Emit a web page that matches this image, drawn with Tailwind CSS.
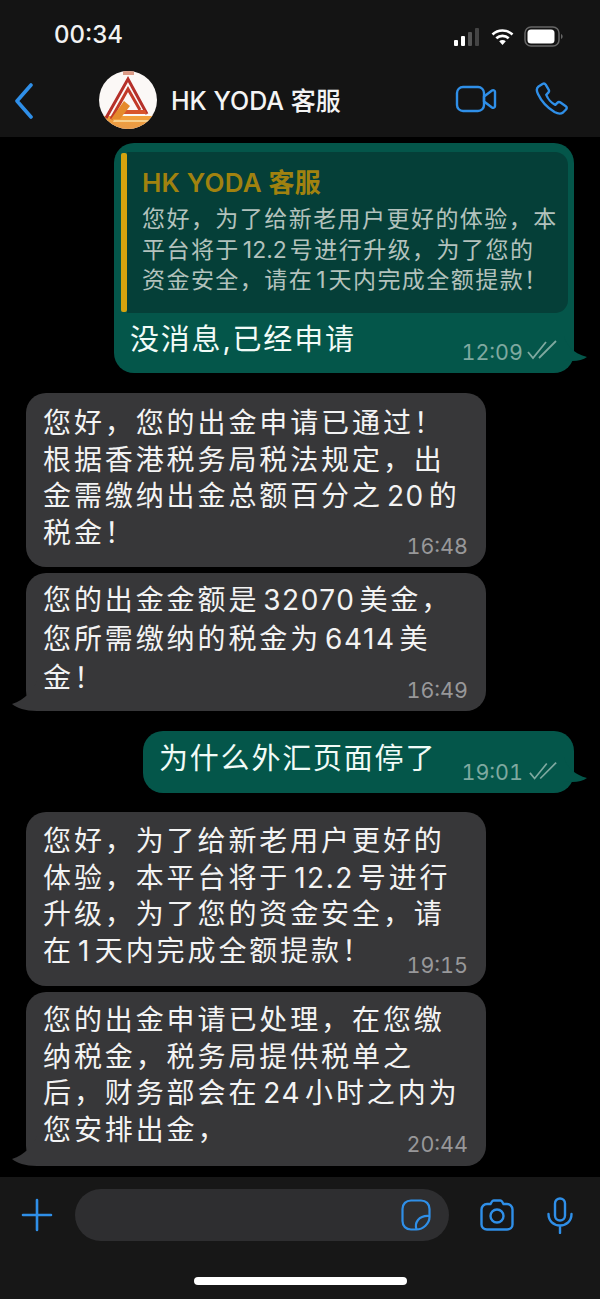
<!DOCTYPE html>
<html lang="zh">
<head>
<meta charset="utf-8">
<script src="https://cdn.jsdelivr.net/npm/@tailwindcss/browser@4"></script>
</head>
<body class="m-0 bg-black">
<div class="w-[600px] h-[1299px] overflow-hidden flex flex-col bg-black text-white font-['Inter','Noto_Sans_CJK_SC',sans-serif]">
  <!-- top -->
  <header class="h-[137px] shrink-0 bg-[#141414] flex flex-col">
    <div class="h-[69px] flex items-end justify-between pl-[54px] pr-[37px] pb-[20px]">
      <span class="text-[24px] leading-[28px] font-medium text-[#f2f2f2]">00:34</span>
      <div class="flex items-center gap-[10px] mb-[2px]">
        <svg class="w-[28px] h-[20px]" viewBox="0 0 28 20"><rect x="1" y="13" width="4" height="6" rx="1" fill="#fff"/><rect x="8" y="9" width="4" height="10" rx="1" fill="#fff"/><rect x="15" y="5" width="4" height="14" rx="1" fill="#555"/><rect x="22" y="1" width="4" height="18" rx="1" fill="#444"/></svg>
        <svg class="w-[23px] h-[18px]" viewBox="0 0 23 18"><path d="M1.500 6.500C7 1.200 16 1.200 21.500 6.500" fill="none" stroke="#fff" stroke-width="2.600"/><path d="M5.300 10.300C8.800 7 14.200 7 17.700 10.300" fill="none" stroke="#fff" stroke-width="2.600"/><path d="M8.200 13.300 11.500 17 14.800 13.300C13 11.600 10 11.600 8.200 13.300Z" fill="#fff"/></svg>
        <svg class="w-[39px] h-[21px]" viewBox="0 0 39 21"><rect x="1" y="1" width="34" height="19" rx="6" fill="none" stroke="#666" stroke-width="1.500"/><rect x="3.500" y="3.500" width="27" height="14" rx="3.500" fill="#fff"/><path d="M37 8c1.200.4 1.600 1.400 1.600 2.500s-.4 2.100-1.600 2.500Z" fill="#666"/></svg>
      </div>
    </div>
    <div class="flex-1 relative flex items-center pl-[13px] pr-[33px]">
      <svg class="w-[22px] h-[36px] -mt-[5px]" viewBox="0 0 22 36"><path d="M18 2 4 18l14 16" fill="none" stroke="#2f8fe8" stroke-width="3.600" stroke-linecap="round" stroke-linejoin="round"/></svg>
      <svg class="w-[60px] h-[60px] ml-[63px] -mt-[6px] shrink-0" viewBox="0 0 60 60">
        <defs>
          <clipPath id="av"><circle cx="30" cy="30" r="29"/></clipPath>
          <linearGradient id="gb" x1="0" y1="0" x2="0" y2="1"><stop offset="0" stop-color="#f2a03a"/><stop offset="1" stop-color="#e89a4a"/></linearGradient>
        </defs>
        <g clip-path="url(#av)">
          <rect width="60" height="60" fill="#fbf8f6"/>
          <rect x="25" y="0" width="11" height="5" fill="#dc9b86"/>
          <path d="M3 42 9 49 5 52Z" fill="#d89a8a"/>
          <path d="M57 42 51 49 55 52Z" fill="#e0b09a"/>
          <rect y="46" width="60" height="14" fill="url(#gb)"/>
          <path d="M8 48 30 9 49 44" fill="none" stroke="#b5302a" stroke-width="3"/>
          <path d="M13 49 30 19 42 40" fill="none" stroke="#c23a28" stroke-width="3"/>
          <path d="M27 40H47L49 44H25Z" fill="#d8552c"/>
          <path d="M26 31 13 49H22L32 36Z" fill="#e58b2c"/>
          <path d="M16 50H50V52H15Z" fill="#f8cf8b"/>
        </g>
      </svg>
      <span class="ml-[13px] text-[25px] leading-[32px] font-medium -mt-[5px] text-[#f4f4f4]">HK YODA 客服</span>
      <div class="ml-auto flex items-center gap-[38px] -mt-[9px]">
        <svg class="w-[42px] h-[30px]" viewBox="0 0 42 30" fill="none" stroke="#2f8fe8" stroke-width="2.400" stroke-linejoin="round"><rect x="2" y="3" width="27" height="24" rx="6"/><path d="M29 12.500 37 6.500c1-.7 3-.2 3 1.300v14.400c0 1.500-2 2-3 1.300L29 17.500Z"/></svg>
        <svg class="w-[33px] h-[34px] -mr-[1px]" viewBox="0 0 33 34" fill="none" stroke="#2f8fe8" stroke-width="2.400" stroke-linejoin="round"><path d="M7.500 2 3.500 4.500C1.500 6 1.500 9 3 12c3.500 7.500 9 13.500 16.500 18 3 1.700 6 2.500 8.500.5l3-3c1-1 1-2.500-.2-3.300l-5.300-3.700c-1-.7-2.300-.6-3.200.3l-2 2c-3.500-1.500-7.500-6-9-10l2-2.200c.8-.9.9-2.200.2-3.200L10.700 2.600C9.900 1.500 8.600 1.400 7.500 2Z"/></svg>
      </div>
    </div>
  </header>

  <!-- messages -->
  <main class="flex-1 flex flex-col px-[26px] text-[28px] leading-[36.5px] tracking-[2.9px] text-[#f3f3f3]">
    <!-- 1 -->
    <div class="relative self-end mt-[6px] w-[460px] h-[230px] rounded-[20px] bg-[#04564a] pt-[9px] pl-[7px] pr-[6px]">
      <div class="h-[161px] flex whitespace-nowrap">
        <div class="w-[6px] my-[1px] rounded-[2px] bg-[#d5a30e] shrink-0"></div>
        <div class="flex-1 rounded-r-[13px] bg-[#053f38] pl-[15px] pt-[13px] overflow-hidden">
          <div class="text-[26px] leading-[36px] tracking-[0.2px] font-semibold text-[#a1820f]">HK YODA 客服</div>
          <div class="text-[23px] leading-[30.5px] tracking-[1.45px] text-[#b3c2bd] mt-[3px]">您好，为了给新老用户更好的体验，本<br>平台将于<span class="mx-[3px] tracking-normal">12.2</span>号进行升级，为了您的<br>资金安全，请在<span class="mx-[3px] tracking-normal">1</span>天内完成全额提款！</div>
        </div>
      </div>
      <div class="pl-[9px] pt-[9px] text-[#f1fbf7] whitespace-nowrap text-[29px] tracking-[1.8px]">没消息,已经申请</div>
      <span class="absolute right-[51px] bottom-[7px] text-[21.500px] leading-[28px] tracking-normal tabular-nums text-[#7fa9a0]">12:09</span>
      <svg class="absolute right-[16px] bottom-[13px] w-[31px] h-[20px]" viewBox="0 0 31 20" fill="none" stroke="#7fa9a0" stroke-width="1.800"><path d="M1 12 6 18 19 2"/><path d="M12 18 29 1"/></svg>
      <svg class="absolute -right-[14px] bottom-[11px] w-[24px] h-[26px]" viewBox="0 0 24 26"><path d="M0 0C2 8 8 17 23 21 18 25 8 26 0 24Z" fill="#04564a"/></svg>
    </div>
    <!-- 2 -->
    <div class="relative mt-[20px] w-[460px] h-[174px] rounded-[20px] bg-[#373739] pl-[17px] pt-[12px] whitespace-nowrap">
      您好，您的出金申请已通过！<br>根据香港税务局税法规定，出<br>金需缴纳出金总额百分之<span class="mx-[4px] tracking-[1.500px]">20</span>的<br>税金！
      <span class="absolute right-[18px] bottom-[8px] text-[21.500px] leading-[26px] tracking-normal tabular-nums text-[#98989a]">16:48</span>
    </div>
    <!-- 3 -->
    <div class="relative mt-[6px] w-[460px] h-[138px] rounded-[20px] bg-[#373739] pl-[17px] pt-[8px] leading-[39px] whitespace-nowrap">
      您的出金金额是<span class="mx-[4px] tracking-[1.500px]">32070</span>美金，<br>您所需缴纳的税金为<span class="mx-[4px] tracking-[1.500px]">6414</span>美<br>金！
      <span class="absolute right-[18px] bottom-[8px] text-[21.500px] leading-[26px] tracking-normal tabular-nums text-[#98989a]">16:49</span>
      <svg class="absolute -left-[15px] bottom-[0px] w-[36px] h-[30px]" viewBox="0 0 36 30"><path d="M26 0C22 9 14 19 1 23 6 27 14 30 26 30H36V20H26Z" fill="#373739"/></svg>
    </div>
    <!-- 4 -->
    <div class="relative self-end mt-[20px] w-[431px] h-[62px] rounded-[20px] bg-[#04564a] pl-[16px] pt-[10px] text-[#f1fbf7] whitespace-nowrap text-[29px] tracking-[1.800px]">
      为什么外汇页面停了
      <span class="absolute right-[51px] bottom-[7px] text-[21.500px] leading-[28px] tracking-normal tabular-nums text-[#7fa9a0]">19:01</span>
      <svg class="absolute right-[16px] bottom-[12px] w-[29px] h-[20px]" viewBox="0 0 31 20" fill="none" stroke="#7fa9a0" stroke-width="1.800"><path d="M1 12 6 18 19 2"/><path d="M12 18 29 1"/></svg>
      <svg class="absolute -right-[14px] bottom-[10px] w-[24px] h-[26px]" viewBox="0 0 24 26"><path d="M0 0C2 8 8 17 23 21 18 25 8 26 0 24Z" fill="#04564a"/></svg>
    </div>
    <!-- 5 -->
    <div class="relative mt-[19px] w-[460px] h-[174px] rounded-[20px] bg-[#373739] pl-[17px] pt-[11px] whitespace-nowrap">
      您好，为了给新老用户更好的<br>体验，本平台将于<span class="mx-[4px] tracking-[1.500px]">12.2</span>号进行<br>升级，为了您的资金安全，请<br>在<span class="mx-[4px] tracking-[1.500px]">1</span>天内完成全额提款！
      <span class="absolute right-[18px] bottom-[8px] text-[21.500px] leading-[26px] tracking-normal tabular-nums text-[#98989a]">19:15</span>
    </div>
    <!-- 6 -->
    <div class="relative mt-[6px] w-[460px] h-[174px] rounded-[20px] bg-[#373739] pl-[17px] pt-[10px] whitespace-nowrap">
      您的出金申请已处理，在您缴<br>纳税金，税务局提供税单之<br>后，财务部会在<span class="mx-[4px] tracking-[1.500px]">24</span>小时之内为<br>您安排出金，
      <span class="absolute right-[18px] bottom-[9px] text-[21.500px] leading-[26px] tracking-normal tabular-nums text-[#98989a]">20:44</span>
      <svg class="absolute -left-[15px] bottom-[0px] w-[36px] h-[30px]" viewBox="0 0 36 30"><path d="M26 0C22 9 14 19 1 23 6 27 14 30 26 30H36V20H26Z" fill="#373739"/></svg>
    </div>
  </main>

  <!-- footer -->
  <footer class="h-[122px] shrink-0 bg-[#171717] relative pt-[12px]">
    <div class="flex items-center pl-[21px] pr-[26px] h-[52px]">
      <svg class="w-[32px] h-[34px] shrink-0" viewBox="0 0 32 34" fill="none" stroke="#2f8fe8" stroke-width="2.600" stroke-linecap="round"><path d="M16 2v30M2 17h28"/></svg>
      <div class="ml-[22px] w-[374px] h-[52px] rounded-[26px] bg-[#2e2e30] flex items-center justify-end pr-[18px]">
        <svg class="w-[30px] h-[32px]" viewBox="0 0 30 32" fill="none" stroke="#2f8fe8" stroke-width="2.200" stroke-linejoin="round"><path d="M10 1.500h10c5 0 8.500 3.500 8.500 8.500v8c0 6.500-6.500 12.500-13 12.500H10c-5 0-8.500-3.500-8.500-8.500V10C1.500 5 5 1.500 10 1.500Z"/><path d="M15.500 30.500c-1-3-.5-7 1.500-9.500s6-4.500 11.500-4"/></svg>
      </div>
      <svg class="ml-[31px] w-[34px] h-[32px] shrink-0" viewBox="0 0 34 32" fill="none" stroke="#2f8fe8" stroke-width="2.400"><path d="M7 5h3.500l1.500-2.500c.4-.7 1-1 1.800-1h6.400c.8 0 1.400.3 1.800 1L23.500 5H27c3 0 5.500 2.500 5.500 5.500v15c0 3-2.500 5-5.500 5H7c-3 0-5.500-2-5.500-5v-15C1.500 7.500 4 5 7 5Z"/><circle cx="17" cy="17" r="6.500"/></svg>
      <svg class="ml-[33px] w-[26px] h-[37px] shrink-0" viewBox="0 0 26 37" fill="none" stroke="#2f8fe8" stroke-width="2.400" stroke-linecap="round"><rect x="8" y="1.500" width="10" height="22" rx="5"/><path d="M1.500 17c0 7 5 11.500 11.500 11.500S24.500 24 24.500 17M13 28.500V36"/></svg>
    </div>
    <div class="absolute left-[194px] top-[100px] w-[213px] h-[8px] rounded-full bg-white"></div>
  </footer>
</div>
</body>
</html>
